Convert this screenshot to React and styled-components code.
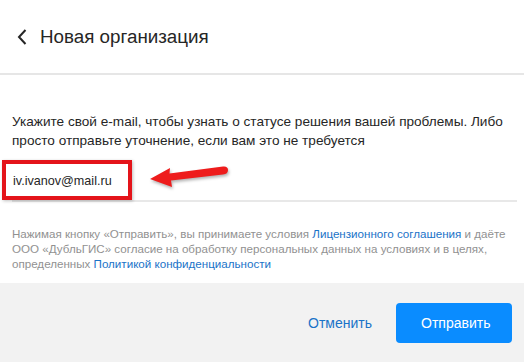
import styled, { createGlobalStyle } from "styled-components";

const GlobalStyle = createGlobalStyle`
  body {
    margin: 0;
    background: #fff;
    font-family: "Liberation Sans", Arial, sans-serif;
  }
`;

const Page = styled.div`
  width: 525px;
  height: 362px;
  display: flex;
  flex-direction: column;
  background: #fff;
  overflow: hidden;
`;

const Header = styled.div`
  height: 73px;
  display: flex;
  align-items: center;
  gap: 12px;
  padding: 0 0 0 16px;
  border-bottom: 2px solid #e6e6e6;
  margin-right: 1px;
`;

const BackButton = styled.button`
  border: none;
  background: none;
  padding: 0;
  display: flex;
  cursor: pointer;
`;

const Title = styled.h1`
  margin: 0;
  font-size: 18.8px;
  font-weight: 400;
  color: #262626;
`;

const Body = styled.div`
  padding: 37px 8px 0 12px;
  display: flex;
  flex-direction: column;
`;

const Lead = styled.p`
  margin: 0;
  font-size: 13.6px;
  line-height: 19px;
  color: #262626;
`;

const InputRow = styled.div`
  position: relative;
  margin-top: 10px;
  height: 40px;
  border-bottom: 2px solid #e8e8e8;
  display: flex;
  align-items: center;
`;

const EmailInput = styled.input`
  border: none;
  outline: none;
  background: transparent;
  font-family: inherit;
  font-size: 12.6px;
  color: #262626;
  padding: 2px 0 0 1px;
  width: 300px;
`;

const Highlight = styled.div`
  position: absolute;
  left: -10px;
  top: 0;
  width: 122px;
  height: 32px;
  border: 4px solid #e4141a;
  box-shadow: 1px 1px 3px rgba(0, 0, 0, 0.25);
  pointer-events: none;
`;

const Arrow = styled.svg`
  position: absolute;
  left: 136px;
  top: 3px;
  filter: drop-shadow(1px 2px 1.5px rgba(0, 0, 0, 0.3));
`;

const Note = styled.p`
  margin: 24px 0 0;
  font-size: 11.6px;
  line-height: 15px;
  color: #919191;
`;

const Link = styled.a`
  color: #1a73c8;
  text-decoration: none;
`;

const Footer = styled.div`
  margin-top: auto;
  height: 79px;
  background: #f2f2f2;
  margin-right: 1px;
  display: flex;
  justify-content: flex-end;
  align-items: center;
  gap: 24px;
  padding: 0 12px 0 0;
`;

const Button = styled.button`
  font-family: inherit;
  font-size: 14px;
  border: none;
  border-radius: 4px;
  height: 40px;
  cursor: pointer;
  padding: ${(p) => (p.$primary ? "0 25px" : "0")};
  width: ${(p) => (p.$primary ? "116px" : "auto")};
  background: ${(p) => (p.$primary ? "#0a8cff" : "transparent")};
  color: ${(p) => (p.$primary ? "#fff" : "#1a73c8")};
`;

export default function App() {
  return (
    <Page>
      <GlobalStyle />
      <Header>
        <BackButton aria-label="Назад">
          <svg width="12" height="18" viewBox="0 0 12 18">
            <path d="M9.5 2 L3 9 L9.5 16" fill="none" stroke="#262626" strokeWidth="2" />
          </svg>
        </BackButton>
        <Title>Новая организация</Title>
      </Header>
      <Body>
        <Lead>
          Укажите свой e-mail, чтобы узнать о статусе решения вашей проблемы. Либо
          просто отправьте уточнение, если вам это не требуется
        </Lead>
        <InputRow>
          <EmailInput defaultValue="iv.ivanov@mail.ru" />
          <Highlight />
          <Arrow width="84" height="28" viewBox="0 0 84 28">
            <path
              d="M2 16 L22 5 L21.5 10.5 L75 3.5 Q80 3 80 7 Q80 11 75 11.5 L23 17.5 L24 24 Z"
              fill="#ee1c1c"
            />
          </Arrow>
        </InputRow>
        <Note>
          Нажимая кнопку «Отправить», вы принимаете условия{" "}
          <Link href="#">Лицензионного соглашения</Link> и даёте ООО «ДубльГИС»
          согласие на обработку персональных данных на условиях и в целях,
          определенных <Link href="#">Политикой конфиденциальности</Link>
        </Note>
      </Body>
      <Footer>
        <Button>Отменить</Button>
        <Button $primary>Отправить</Button>
      </Footer>
    </Page>
  );
}
